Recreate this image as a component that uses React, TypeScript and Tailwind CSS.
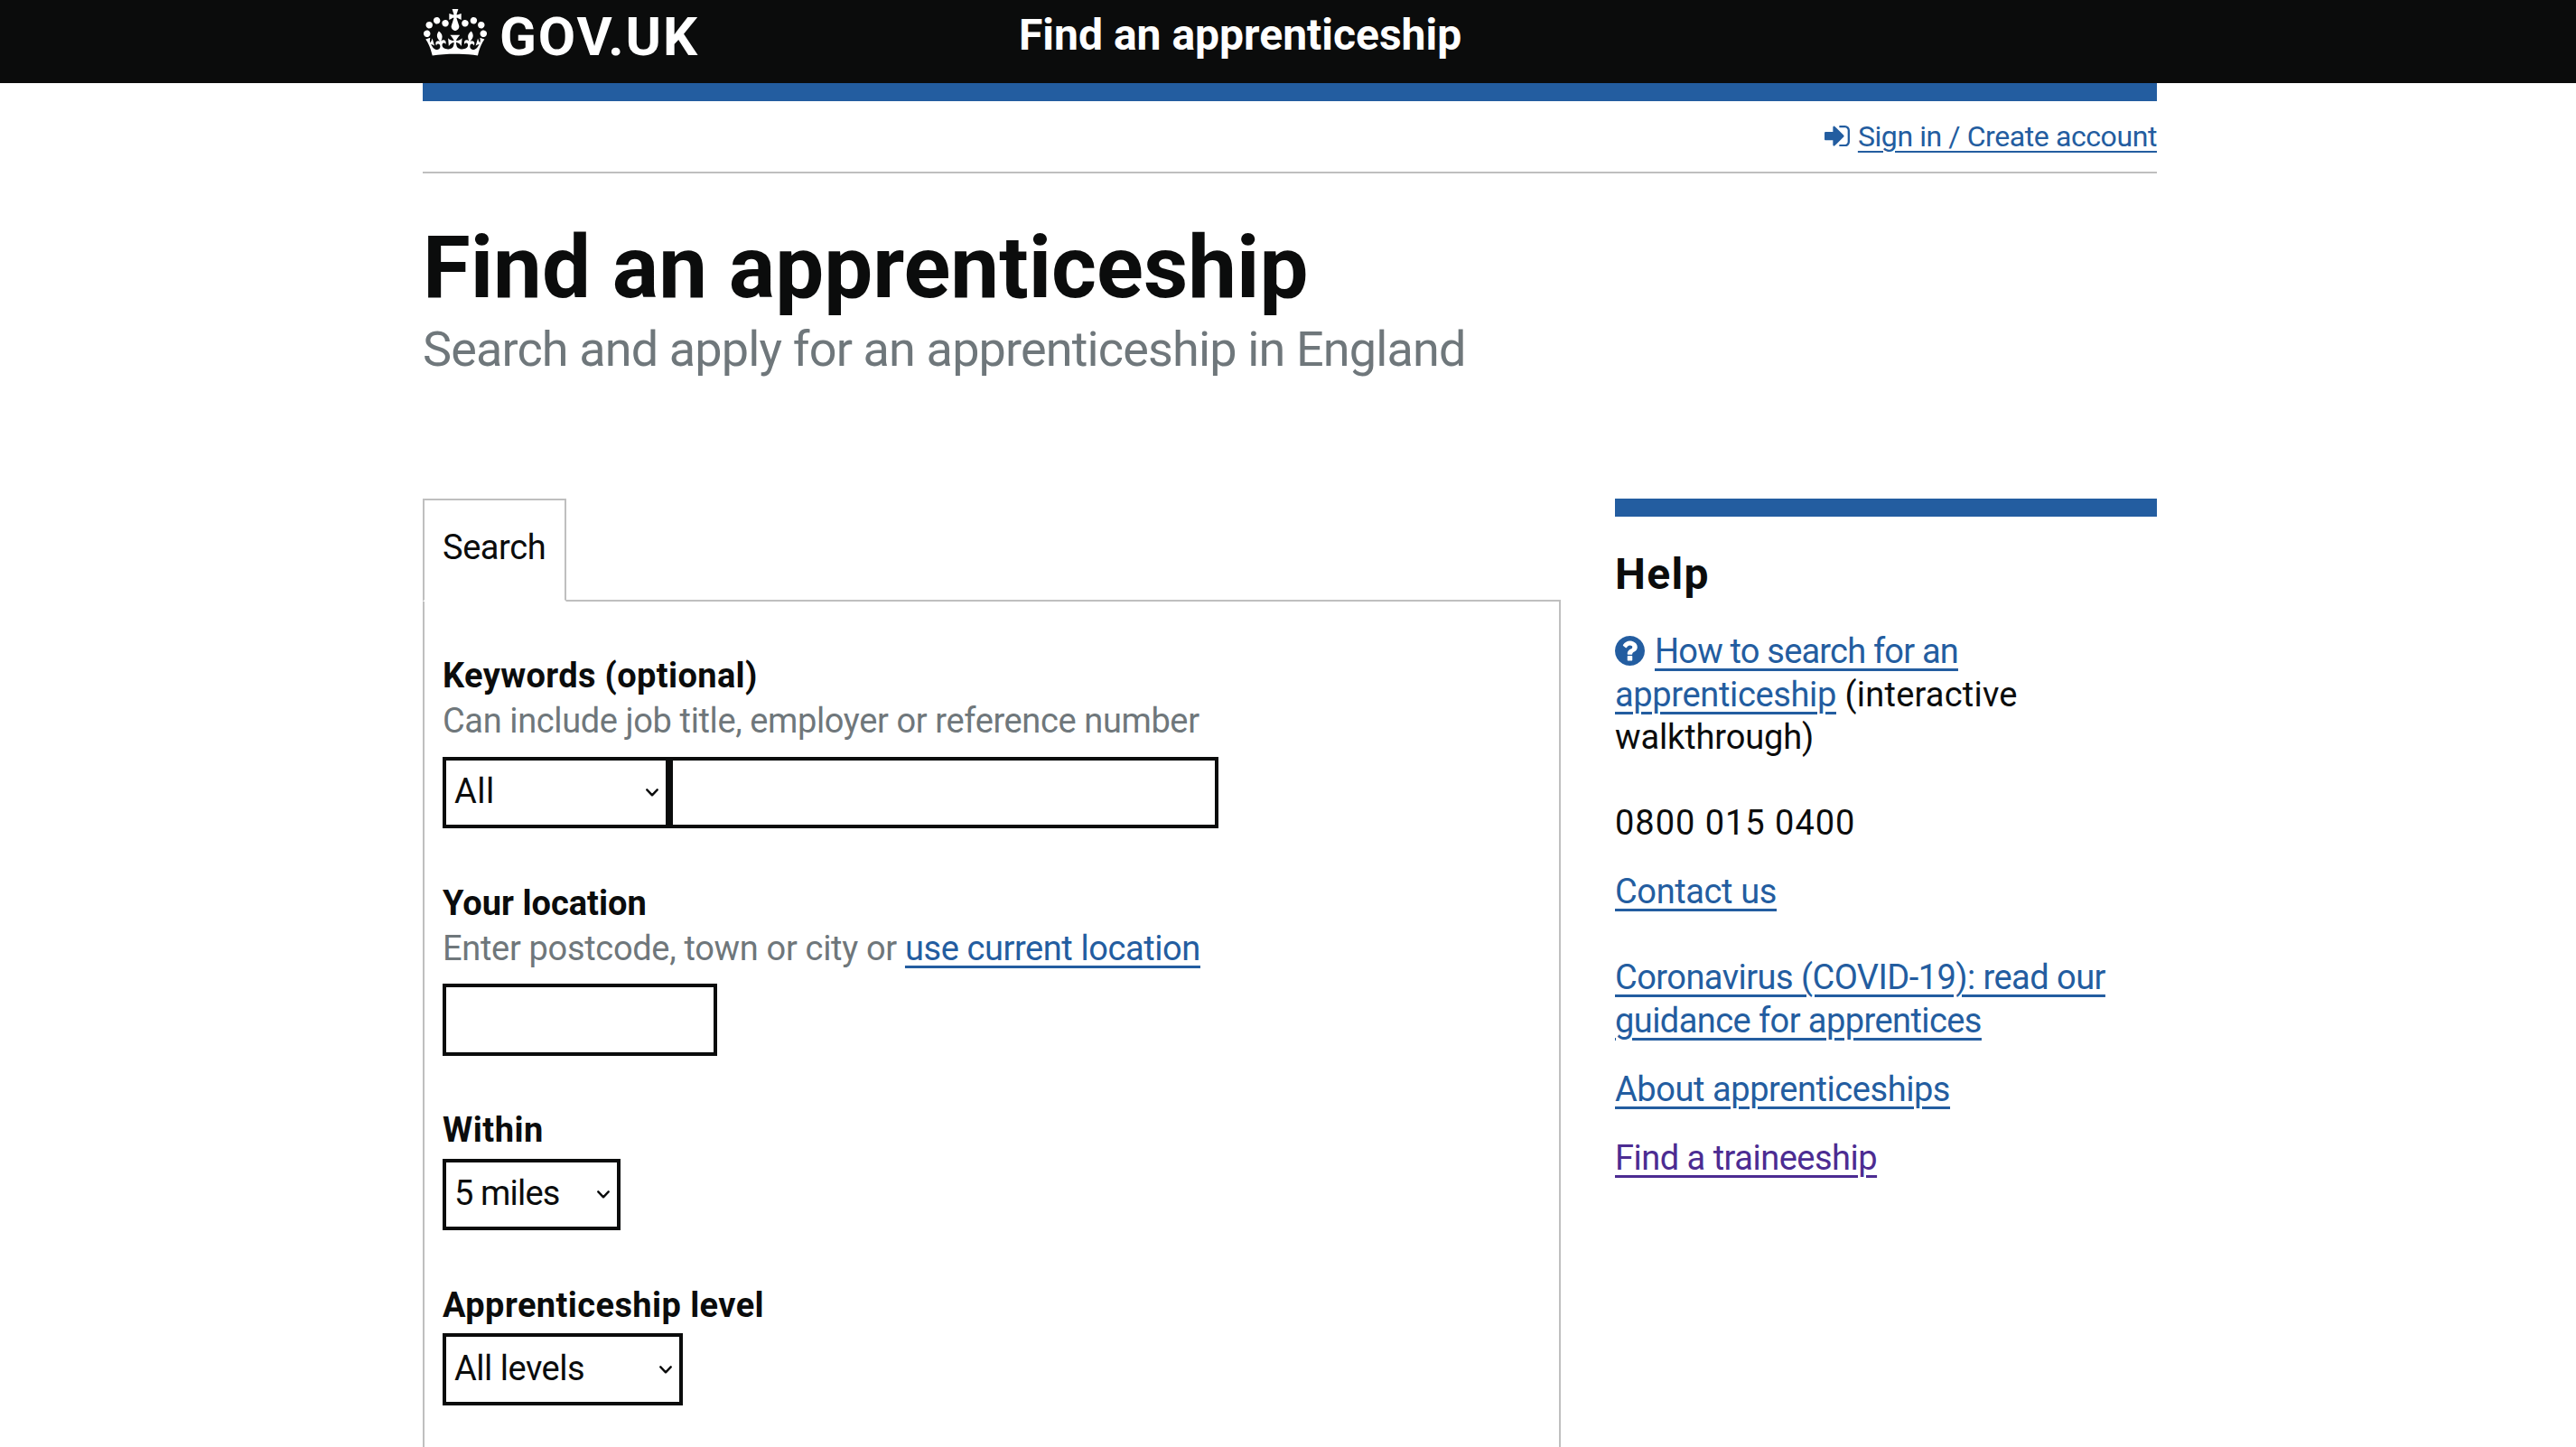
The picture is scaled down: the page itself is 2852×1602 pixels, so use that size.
import React from "react";

function Crown({ className }: { className: string }) {
  return (
    <svg viewBox="0 0 132 97" className={className} fill="currentColor" preserveAspectRatio="none" aria-hidden="true">
      <path
        fillRule="evenodd"
        d="M25 30.2c3.5 1.5 7.7-.2 9.1-3.7 1.5-3.6-.2-7.8-3.9-9.2-3.6-1.4-7.6.3-9.1 3.9-1.4 3.5.3 7.5 3.9 9zM9 39.5c3.6 1.5 7.8-.2 9.2-3.7 1.5-3.6-.2-7.8-3.9-9.1-3.6-1.5-7.6.2-9.1 3.8-1.4 3.5.3 7.5 3.8 9zM4.4 57.2c3.5 1.5 7.7-.2 9.1-3.8 1.5-3.6-.2-7.7-3.9-9.1-3.5-1.5-7.6.3-9.1 3.8-1.4 3.5.3 7.6 3.9 9.1zm38.3-21.4c3.5 1.5 7.7-.2 9.1-3.8 1.5-3.6-.2-7.7-3.9-9.1-3.6-1.5-7.6.3-9.1 3.8-1.3 3.6.4 7.7 3.9 9.1zm64.4-5.6c-3.6 1.5-7.8-.2-9.1-3.7-1.5-3.6.2-7.8 3.8-9.2 3.6-1.4 7.7.3 9.2 3.9 1.3 3.5-.4 7.5-3.9 9zm15.9 9.3c-3.6 1.5-7.7-.2-9.1-3.7-1.5-3.6.2-7.8 3.7-9.1 3.6-1.5 7.7.2 9.2 3.8 1.5 3.5-.3 7.5-3.8 9zm4.7 17.7c-3.6 1.5-7.8-.2-9.2-3.8-1.5-3.6.2-7.7 3.9-9.1 3.6-1.5 7.7.3 9.2 3.8 1.3 3.5-.4 7.6-3.9 9.1zM89.3 35.8c-3.6 1.5-7.8-.2-9.2-3.8-1.4-3.6.2-7.7 3.9-9.1 3.6-1.5 7.7.3 9.2 3.8 1.4 3.6-.3 7.7-3.9 9.1zM69.7 17.7l8.9 4.7V9.3l-8.9 2.8c-.2-.3-.5-.6-.9-.9L72.4 0H59.6l3.5 11.2c-.3.3-.6.5-.9.9l-8.8-2.8v13.1l8.8-4.7c.3.3.6.7.9.9l-5 15.4v.1c-.2.8-.4 1.6-.4 2.4 0 4.1 3.1 7.5 7 8.1h.2c.3 0 .7.1 1 .1.4 0 .7 0 1-.1h.2c4-.6 7.1-4.1 7.1-8.1 0-.8-.1-1.7-.4-2.4V34l-5.1-15.4c.4-.2.7-.6 1-.9zM66 92.8c16.9 0 32.8 1.1 47.1 3.2 4-16.9 8.9-26.7 14-33.5l-9.6-3.4c1 4.9 1.1 7.2 0 10.2-1.5-1.4-3-4.3-4.2-8.7L108.6 76c2.8-2 5-3.2 7.5-3.3-4.4 9.4-10 11.9-13.6 11.2-4.3-.8-6.3-4.6-5.6-7.9 1-4.7 5.7-5.9 8-.5 4.3-8.7-3-11.4-7.6-8.8 7.1-7.2 7.9-13.5 2.1-21.1-8 6.1-8.1 12.3-4.5 20.8-4.7-5.4-12.1-2.5-9.5 6.2 3.4-5.2 7.9-2 7.2 3.1-.6 4.3-6.4 7.8-13.5 7.2-10.3-.9-10.9-8-11.2-13.8 2.5-.5 7.1 1.8 11 7.3L80.2 60c-4.1 4.4-8 5.3-12.3 5.4 1.4-4.4 8-11.6 8-11.6H55.5s6.4 7.2 7.9 11.6c-4.2-.1-8-1-12.3-5.4l1.4 16.4c3.9-5.5 8.5-7.7 10.9-7.3-.3 5.8-.9 12.8-11.1 13.8-7.2.6-12.9-2.9-13.5-7.2-.7-5 3.8-8.3 7.1-3.1 2.7-8.7-4.6-11.6-9.4-6.2 3.7-8.5 3.6-14.7-4.6-20.8-5.8 7.6-5 13.9 2.2 21.1-4.7-2.6-11.9.1-7.7 8.8 2.3-5.5 7.1-4.2 8.1.5.7 3.3-1.3 7.1-5.7 7.9-3.5.7-9-1.8-13.5-11.2 2.5.1 4.7 1.3 7.5 3.3l-4.7-15.4c-1.2 4.4-2.7 7.2-4.3 8.7-1.1-3-.9-5.3 0-10.2l-9.5 3.4c5 6.9 9.9 16.7 14 33.5 14.8-2.1 30.8-3.2 47.7-3.2z"
      />
    </svg>
  );
}

function SignInIcon({ className }: { className: string }) {
  return (
    <svg viewBox="128 256 1536 1280" className={className} fill="currentColor" aria-hidden="true">
      <path d="M1312 896q0 26-19 45l-544 544q-19 19-45 19t-45-19-19-45v-288h-448q-26 0-45-19t-19-45v-384q0-26 19-45t45-19h448v-288q0-26 19-45t45-19 45 19l544 544q19 19 19 45zm352-352v704q0 119-84.5 203.500t-203.500 84.500h-320q-13 0-22.500-9.500t-9.500-22.500q0-4-1-20t-.5-26.500 3-23.500 10-19.500 20.500-6.500h320q66 0 113-47t47-113v-704q0-66-47-113t-113-47h-312l-11.500-1-11.500-3-8-5.500-7-9-2-13.500q0-4-1-20t-.5-26.500 3-23.500 10-19.500 20.500-6.500h320q119 0 203.500 84.500t84.500 203.500z" />
    </svg>
  );
}

function QuestionIcon({ className }: { className: string }) {
  return (
    <svg viewBox="128 128 1536 1536" className={className} fill="currentColor" aria-hidden="true">
      <path d="M1024 1376v-192q0-14-9-23t-23-9h-192q-14 0-23 9t-9 23v192q0 14 9 23t23 9h192q14 0 23-9t9-23zm256-672q0-88-55.5-163t-138.500-116-170-41q-243 0-371 213-15 24 8 42l132 100q7 6 19 6 16 0 25-12 53-68 86-92 34-24 86-24 48 0 85.500 26t37.500 59q0 38-20 61t-68 45q-63 28-115.500 86.500t-52.500 125.500v36q0 14 9 23t23 9h192q14 0 23-9t9-23q0-19 21.500-49.500t54.500-49.500q32-18 49-28.500t46-35 44.500-48 28-60.500 12.500-81zm384 192q0 209-103 385.500t-279.500 279.500-385.500 103-385.500-103-279.500-279.500-103-385.500 103-385.500 279.500-279.500 385.500-103 385.500 103 279.500 279.500 103 385.500z" />
    </svg>
  );
}

function Link({ className = "text-[#235da0]", children }: { className?: string; children: React.ReactNode }) {
  return (
    <a href="#" className={`underline decoration-[3px] underline-offset-[6px] ${className}`}>
      {children}
    </a>
  );
}

function SelectBox({ className, text, children }: { className: string; text: string; children: string }) {
  return (
    <div className={`flex items-center justify-between border-4 border-[#0b0c0c] pl-[9px] pr-2 ${className}`}>
      <span className={`pb-[3px] leading-[48px] ${text}`}>{children}</span>
      <svg viewBox="0 0 14 9" className="h-[9px] w-[14px]" fill="none" stroke="currentColor" strokeWidth="2.4" strokeLinecap="round" strokeLinejoin="round" aria-hidden="true">
        <path d="M1.3 1.3 7 7.3 12.7 1.3" />
      </svg>
    </div>
  );
}

export default function App() {
  return (
    <div className="h-[1602px] overflow-hidden bg-white font-['Roboto',sans-serif] text-[38px] text-[#0b0c0c]">
      <header className="h-[92px] bg-[#0b0c0c] text-white">
        <div className="ml-[468px] flex w-[1920px] items-start">
          <a href="#" className="flex w-[660px] items-start">
            <Crown className="mt-[10px] ml-px h-[52px] w-[70px]" />
            <span className="mt-[11px] ml-[14px] text-[60px] leading-[60px] font-bold tracking-[1.92px]">GOV.UK</span>
          </a>
          <a href="#" className="mt-[9px] text-[48px] leading-[60px] font-bold">Find an apprenticeship</a>
        </div>
      </header>

      <div className="ml-[468px] w-[1920px]">
        <div className="h-5 bg-[#235da0]" />
        <div className="flex h-20 items-start justify-end border-b-2 border-[#bfbfbf] pt-[19px] text-[32px] leading-10 text-[#235da0]">
          <SignInIcon className="mt-2 mr-[9px] h-[23.3px] w-7" />
          <a href="#" className="tracking-[-0.41px] underline decoration-2 underline-offset-[5px]">Sign in / Create account</a>
        </div>

        <h1 className="mt-[54px] text-[96px] leading-[100px] font-bold">Find an apprenticeship</h1>
        <p className="mt-[11px] text-[54px] leading-[60px] tracking-[-0.86px] text-[#6f777b]">
          Search and apply for an apprenticeship in England
        </p>

        <div className="mt-[135px] flex items-start justify-between">
          <main className="w-[1260px]">
            <div className="relative -mb-0.5 flex h-[114px] w-[159px] border-2 border-[#bfbfbf] border-b-white bg-white pt-[28px] pl-5 leading-[48px] tracking-[-0.42px]">
              Search
            </div>
            <form className="h-[1000px] border-2 border-[#bfbfbf] px-5 pt-[58px] leading-[48px]">
              <div className="font-bold tracking-[0.36px]">Keywords (optional)</div>
              <div className="mt-0.5 tracking-[-0.38px] text-[#6f777b]">Can include job title, employer or reference number</div>
              <div className="mt-4 flex">
                <SelectBox className="h-[79px] w-[251px]" text="tracking-[0.5px]">All</SelectBox>
                <input className="h-[79px] w-[608px] border-4 border-[#0b0c0c]" />
              </div>

              <div className="mt-[59px] font-bold">Your location</div>
              <div className="mt-0.5 text-[#6f777b]">
                <span className="tracking-[-0.32px]">Enter postcode, town or city or </span>
                <Link className="tracking-[-0.41px] text-[#235da0]">use current location</Link>
              </div>
              <input className="mt-[15px] block h-20 w-[304px] border-4 border-[#0b0c0c]" />

              <div className="mt-[58px] font-bold tracking-[0.5px]">Within</div>
              <SelectBox className="mt-2 h-[79px] w-[197px]" text="tracking-[-0.84px]">5 miles</SelectBox>

              <div className="mt-[59px] font-bold tracking-[0.41px]">Apprenticeship level</div>
              <SelectBox className="mt-[7px] h-20 w-[266px]" text="tracking-[-0.49px]">All levels</SelectBox>
            </form>
          </main>

          <aside className="w-[600px] border-t-[20px] border-[#235da0] leading-[47.5px]">
            <h2 className="mt-[34px] text-[48px] leading-[60px] font-bold tracking-[1.36px]">Help</h2>
            <p className="mt-8">
              <QuestionIcon className="mr-[11px] inline-block size-[33px] translate-y-[3px] align-baseline text-[#235da0]" />
              <Link className="tracking-[-0.8px] text-[#235da0]">How to search for an</Link>
              <br />
              <Link className="tracking-[-0.35px] text-[#235da0]">apprenticeship</Link>
              <span className="tracking-[0.22px]"> (interactive</span>
              <br />
              <span className="tracking-[-0.13px]">walkthrough)</span>
              <br />
              <br />
              <span className="tracking-[0.97px]">0800 015 0400</span>
            </p>
            <p className="mt-7">
              <Link className="tracking-[-0.38px] text-[#235da0]">Contact us</Link>
            </p>
            <p className="mt-12">
              <Link className="tracking-[-0.54px] text-[#235da0]">Coronavirus (COVID-19): read our</Link>
              <br />
              <Link className="tracking-[-0.57px] text-[#235da0]">guidance for apprentices</Link>
            </p>
            <p className="mt-[28.5px]">
              <Link className="tracking-[-0.43px] text-[#235da0]">About apprenticeships</Link>
            </p>
            <p className="mt-[28.5px]">
              <Link className="tracking-[-0.5px] text-[#4c2c92]">Find a traineeship</Link>
            </p>
          </aside>
        </div>
      </div>
    </div>
  );
}
